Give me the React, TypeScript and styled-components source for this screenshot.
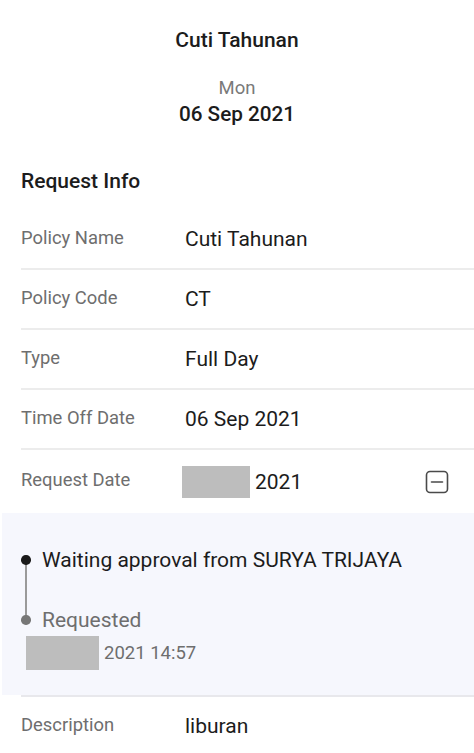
import styled, { createGlobalStyle } from "styled-components";

const GlobalStyle = createGlobalStyle`
  body {
    margin: 0;
    background: #ffffff;
    font-family: Roboto, "Noto Sans", Arial, sans-serif;
    -webkit-font-smoothing: antialiased;
  }
  * { box-sizing: border-box; }
`;

interface InfoItem {
  label: string;
  value: string;
}

const infoItems: InfoItem[] = [
  { label: "Policy Name", value: "Cuti Tahunan" },
  { label: "Policy Code", value: "CT" },
  { label: "Type", value: "Full Day" },
  { label: "Time Off Date", value: "06 Sep 2021" },
];

function MinusSquare() {
  return (
    <svg width="24" height="24" viewBox="0 0 24 24" fill="none">
      <rect x="1.5" y="1.5" width="21" height="21" rx="3.5" stroke="#4a4a4a" strokeWidth="1.6" />
      <line x1="6.5" y1="12" x2="17.5" y2="12" stroke="#4a4a4a" strokeWidth="1.6" strokeLinecap="round" />
    </svg>
  );
}

export default function App() {
  return (
    <>
      <GlobalStyle />
      <Page>
        <Header>
          <Title>Cuti Tahunan</Title>
          <Day>Mon</Day>
          <DateText>06 Sep 2021</DateText>
        </Header>

        <SectionTitle>Request Info</SectionTitle>

        <InfoList>
          {infoItems.map((item) => (
            <Row key={item.label}>
              <Label>{item.label}</Label>
              <Value>{item.value}</Value>
            </Row>
          ))}
          <Row $last>
            <Label>Request Date</Label>
            <Value>
              <Masked $w={68} $h={32} $shift={-3} />
              2021
            </Value>
            <ToggleButton aria-label="collapse">
              <MinusSquare />
            </ToggleButton>
          </Row>
        </InfoList>

        <ApprovalPanel>
          <Timeline>
            <Step $line>
              <Dot $active />
              <StepText $active>Waiting approval from SURYA TRIJAYA</StepText>
            </Step>
            <Step>
              <Dot />
              <StepText>Requested</StepText>
            </Step>
          </Timeline>
          <StepDate>
            <Masked $w={73} $h={34} />
            2021 14:57
          </StepDate>
        </ApprovalPanel>

        <DescRow>
          <Label>Description</Label>
          <Value>liburan</Value>
        </DescRow>
      </Page>
    </>
  );
}

const Page = styled.div`
  width: 474px;
  min-height: 753px;
  overflow: hidden;
  color: #1f1f1f;
`;

const Header = styled.div`
  display: flex;
  flex-direction: column;
  align-items: center;
  padding-top: 27px;
`;

const Title = styled.div`
  font-size: 21px;
  font-weight: 500;
  line-height: 26px;
  color: #1c1c1c;
`;

const Day = styled.div`
  margin-top: 24px;
  font-size: 18.5px;
  line-height: 22px;
  color: #7a7a7a;
`;

const DateText = styled.div`
  margin-top: 2px;
  font-size: 20.7px;
  font-weight: 500;
  line-height: 26px;
  color: #1c1c1c;
`;

const SectionTitle = styled.div`
  margin-top: 42px;
  padding-left: 21px;
  font-size: 21px;
  font-weight: 500;
  line-height: 24px;
  color: #1c1c1c;
`;

const InfoList = styled.div`
  margin-top: 17px;
  padding-left: 21px;
`;

const Row = styled.div<{ $last?: boolean }>`
  display: flex;
  align-items: center;
  height: ${(p) => (p.$last ? "63px" : "60px")};
  border-bottom: ${(p) => (p.$last ? "none" : "2px solid #ececec")};
  padding-right: 25px;
`;

const Label = styled.div`
  width: 164px;
  flex-shrink: 0;
  font-size: 18.4px;
  line-height: 22px;
  color: #6e6e6e;
  margin-top: -3px;
`;

const Value = styled.div`
  flex: 1;
  display: flex;
  align-items: center;
  font-size: 21px;
  line-height: 26px;
  color: #1c1c1c;
`;

const Masked = styled.span<{ $w: number; $h: number; $shift?: number }>`
  display: inline-block;
  width: ${(p) => p.$w}px;
  height: ${(p) => p.$h}px;
  background: #bdbdbd;
  margin-left: ${(p) => p.$shift ?? 0}px;
  margin-right: 5px;
`;

const ToggleButton = styled.button`
  display: flex;
  align-items: center;
  justify-content: center;
  border: none;
  background: none;
  padding: 0;
  width: 24px;
  height: 24px;
  cursor: pointer;
`;

const ApprovalPanel = styled.div`
  background: #f6f7fd;
  margin-left: 2px;
  padding: 34px 21px 25px 19px;
  height: 182px;
`;

const Timeline = styled.div`
  display: flex;
  flex-direction: column;
`;

const Step = styled.div<{ $line?: boolean }>`
  position: relative;
  display: flex;
  align-items: center;
  padding-bottom: ${(p) => (p.$line ? "34px" : "0")};

  &::after {
    content: "";
    display: ${(p) => (p.$line ? "block" : "none")};
    position: absolute;
    left: 4px;
    top: 12px;
    width: 1.5px;
    height: 60px;
    background: #9a9a9a;
  }
`;

const Dot = styled.span<{ $active?: boolean }>`
  width: 9.5px;
  height: 9.5px;
  border-radius: 50%;
  flex-shrink: 0;
  background: ${(p) => (p.$active ? "#1a1a1a" : "#777777")};
  margin-right: 11.5px;
  position: relative;
  z-index: 1;
`;

const StepText = styled.div<{ $active?: boolean }>`
  font-size: 21px;
  line-height: 26px;
  color: ${(p) => (p.$active ? "#1c1c1c" : "#6e6e6e")};
`;

const StepDate = styled.div`
  display: flex;
  align-items: center;
  margin-top: 3px;
  margin-left: 5px;
  font-size: 18.5px;
  color: #6e6e6e;
`;

const DescRow = styled.div`
  display: flex;
  align-items: center;
  height: 60px;
  margin-left: 21px;
  border-top: 2px solid #e8e8ec;
`;
